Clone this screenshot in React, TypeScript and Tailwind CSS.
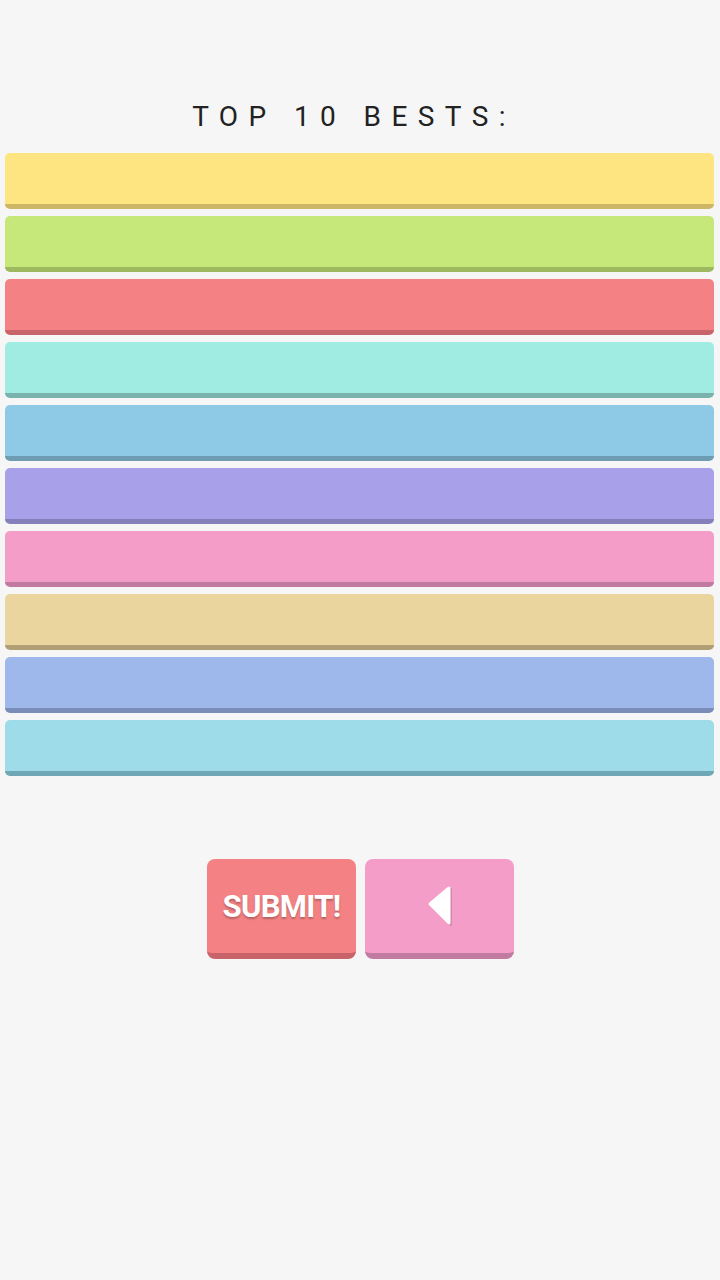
const BARS = [
  "bg-[#fee581] border-[#cdb766]",
  "bg-[#c6e87b] border-[#9eb85f]",
  "bg-[#f48284] border-[#c9636a]",
  "bg-[#a0ebe2] border-[#7ab2ae]",
  "bg-[#8ecae6] border-[#6e9db3]",
  "bg-[#a9a0ea] border-[#8580ba]",
  "bg-[#f49dc8] border-[#c27ba0]",
  "bg-[#ebd59f] border-[#b09e74]",
  "bg-[#9eb8eb] border-[#7a8db8]",
  "bg-[#9edcea] border-[#6fa7b6]",
];

export default function App() {
  return (
    <div
      className="min-h-[1280px] w-[720px] bg-[#f6f6f6] pt-[103px]"
      style={{ fontFamily: "Roboto, 'Liberation Sans', sans-serif" }}
    >
      <h1 className="text-center text-[28px] leading-none font-normal tracking-[10.4px] text-[#222222] mb-[22px] pr-[12px]">
        TOP 10 BESTS:
      </h1>

      {/* score rows */}
      <div className="flex flex-col gap-[7px] pl-[5px] pr-[6px]">
        {BARS.map((c, i) => (
          <div key={i} className={`h-[56px] rounded-[5px] border-b-[5px] ${c}`} />
        ))}
      </div>

      {/* actions */}
      <div className="flex justify-center gap-[9px] mt-[83px] pl-[1px]">
        <button className="w-[149px] h-[100px] rounded-[8px] border-b-[6px] bg-[#f48284] border-[#c9636a] flex items-center justify-center pt-[3px]">
          <span className="text-white text-[31px] font-bold tracking-[-0.7px] [text-shadow:0_2px_2px_rgba(0,0,0,0.25)]">
            SUBMIT!
          </span>
        </button>
        <button className="w-[149px] h-[100px] rounded-[8px] border-b-[6px] bg-[#f49dc8] border-[#c27ba0] flex items-center justify-center">
          <svg width="30" height="44" viewBox="0 0 30 44" className="ml-[1px]">
            <polygon points="5,20 24,4 24,39" fill="#b57093" opacity="0.5" stroke="#b57093" strokeWidth="3" strokeLinejoin="round" transform="translate(1.5,1.5)" />
            <polygon points="5,20 24,4 24,39" fill="#ffffff" stroke="#ffffff" strokeWidth="3" strokeLinejoin="round" />
          </svg>
        </button>
      </div>
    </div>
  );
}
